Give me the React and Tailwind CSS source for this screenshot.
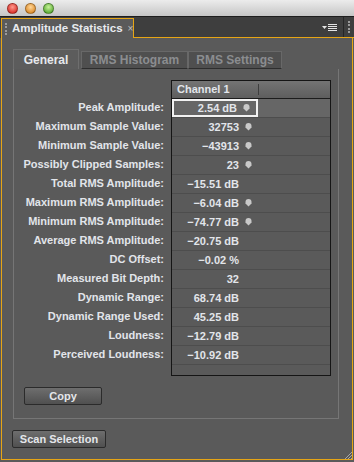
import React from 'react';

const ROWS = [
  { label: 'Peak Amplitude:', value: '2.54 dB', pin: true, active: true },
  { label: 'Maximum Sample Value:', value: '32753', pin: true },
  { label: 'Minimum Sample Value:', value: '\u221243913', pin: true },
  { label: 'Possibly Clipped Samples:', value: '23', pin: true },
  { label: 'Total RMS Amplitude:', value: '\u221215.51 dB' },
  { label: 'Maximum RMS Amplitude:', value: '\u22126.04 dB', pin: true },
  { label: 'Minimum RMS Amplitude:', value: '\u221274.77 dB', pin: true },
  { label: 'Average RMS Amplitude:', value: '\u221220.75 dB' },
  { label: 'DC Offset:', value: '\u22120.02 %' },
  { label: 'Measured Bit Depth:', value: '32' },
  { label: 'Dynamic Range:', value: '68.74 dB' },
  { label: 'Dynamic Range Used:', value: '45.25 dB' },
  { label: 'Loudness:', value: '\u221212.79 dB' },
  { label: 'Perceived Loudness:', value: '\u221210.92 dB' },
];

function Pin() {
  return (
    <svg width="7" height="8" viewBox="0 0 7 8" className="shrink-0">
      <path d="M0.5 3 A3 3 0 0 1 6.5 3 L6.5 4.5 L3.5 7.5 L0.5 4.5 Z" fill="#c9c9c9" />
    </svg>
  );
}

function Light({ from, to }) {
  return (
    <span
      className="w-[11px] h-[11px] rounded-full border border-black/30"
      style={{ background: `radial-gradient(circle at 50% 35%, ${from}, ${to})` }}
    />
  );
}

function Grip() {
  return <div className="w-[2px] h-[12px] shrink-0 border-l-2 border-dotted border-[#9a9a9a]" />;
}

function Button({ children, className = '' }) {
  return (
    <button className={`h-[18px] rounded-[2px] border border-[#2b2b2b] bg-gradient-to-b from-[#6e6e6e] to-[#505050] text-[11px] font-bold text-[#e4e6ea] leading-none whitespace-nowrap ${className}`}>
      {children}
    </button>
  );
}

export default function App() {
  return (
    <div className="w-[354px] h-[462px] bg-[#5a5a5a] flex flex-col overflow-hidden font-['Liberation_Sans',sans-serif] text-[#e2e5ea]">
      {/* window title bar */}
      <div className="h-[16px] shrink-0 bg-gradient-to-b from-[#ececec] to-[#c6c6c6] flex items-center gap-[7px] pl-[7px]">
        <Light from="#ff9a8f" to="#d0140e" />
        <Light from="#ffd79a" to="#d5780c" />
        <Light from="#c8f29a" to="#3f9a1a" />
      </div>

      {/* panel tab bar */}
      <div className="h-[22px] shrink-0 bg-[#3e3e3e] border-t border-[#1e1e1e] flex items-end">
        <div className="h-[20px] w-[133px] shrink-0 ml-[1px] bg-[#5a5a5a] border-t border-x border-[#e6a515] flex items-center pl-[3px] gap-[5px] whitespace-nowrap">
          <Grip />
          <span className="text-[11.5px] font-bold text-[#e8eaee]">Amplitude Statistics</span>
          <span className="text-[10px] text-[#bdbdbd]">×</span>
        </div>
        <div className="flex-1 h-full border-b border-[#e6a515] flex items-center justify-end">
          <div className="flex items-center gap-[1px] mr-[6px]">
            <svg width="5" height="3" viewBox="0 0 5 3"><path d="M0 0 H5 L2.5 3 Z" fill="#e4e4e4" /></svg>
            <svg width="9" height="7" viewBox="0 0 9 7">
              <rect y="0" width="9" height="1" fill="#e4e4e4" />
              <rect y="2" width="9" height="1" fill="#e4e4e4" />
              <rect y="4" width="9" height="1" fill="#e4e4e4" />
              <rect y="6" width="9" height="1" fill="#e4e4e4" />
            </svg>
          </div>
          <div className="h-full border-l border-[#262626] w-[11px] flex items-center justify-center">
            <Grip />
          </div>
        </div>
      </div>

      {/* panel body */}
      <div className="relative flex-1 mx-[1px] mb-[2px] border-x border-b border-[#e6a515] flex flex-col pl-[11px] pr-[13px] pt-[11px]">
        {/* inner tabs */}
        <div className="flex items-end h-[20px]">
          <div className="h-[20px] w-[66px] bg-[#5c5c5c] border-t border-x border-[#6e6e6e] flex items-center justify-center text-[12px] font-bold text-[#e6e8ec]">
            General
          </div>
          <div className="h-[18px] w-[107px] ml-[2px] bg-[#4f4f4f] border border-[#686868] border-b-[#2e2e2e] flex items-center justify-center text-[12px] font-bold text-[#8b8d90]">
            RMS Histogram
          </div>
          <div className="h-[18px] w-[94px] bg-[#4f4f4f] border border-[#686868] border-b-[#2e2e2e] flex items-center justify-center text-[12px] font-bold text-[#8b8d90]">
            RMS Settings
          </div>
        </div>

        <div className="w-[326px] h-[350px] border border-t-0 border-[#767676] flex flex-col">
          <div className="flex mt-[11px]">
            {/* labels */}
            <div className="w-[157px] pt-[18px] flex flex-col">
              {ROWS.map((r) => (
                <div key={r.label} className="h-[19px] flex items-center justify-end pr-[7px] text-[11px] font-bold whitespace-nowrap">
                  {r.label}
                </div>
              ))}
            </div>

            {/* table */}
            <div className="w-[160px] h-[296px] border border-[#151515] bg-[#5a5a5a] flex flex-col">
              <div className="h-[18px] bg-gradient-to-b from-[#747474] to-[#5e5e5e] border-b border-[#1c1c1c] flex items-center">
                <div className="w-[86px] h-full flex items-center pl-[5px] text-[11px] font-bold">
                  Channel 1
                </div>
                <div className="w-[1px] h-[11px] bg-[#3e3e3e]" />
              </div>
              {ROWS.map((r) => (
                <div
                  key={r.label}
                  className={`h-[19px] shrink-0 flex items-center border-b border-[#4d4d4d] ${r.active ? 'bg-[#666666]' : ''}`}
                >
                  <div className={`w-[86px] h-full flex items-center justify-end gap-[6px] pr-[6px] text-[11px] font-bold ${r.active ? 'border-2 border-[#f2f2f2]' : ''}`}>
                    <span>{r.value}</span>
                    {r.pin ? <Pin /> : <span className="w-[7px]" />}
                  </div>
                </div>
              ))}
            </div>
          </div>

          <Button className="w-[78px] ml-[10px] mt-[11px]">Copy</Button>
        </div>

        <Button className="w-[94px] mt-[11px] -ml-[1px]">Scan Selection</Button>

        {/* resize grip */}
        <svg width="8" height="8" viewBox="0 0 8 8" className="absolute right-0 bottom-0">
          <path d="M8 1 L1 8 M8 4 L4 8 M8 7 L7 8" stroke="#a8a8a8" strokeWidth="1" />
        </svg>
      </div>
    </div>
  );
}
